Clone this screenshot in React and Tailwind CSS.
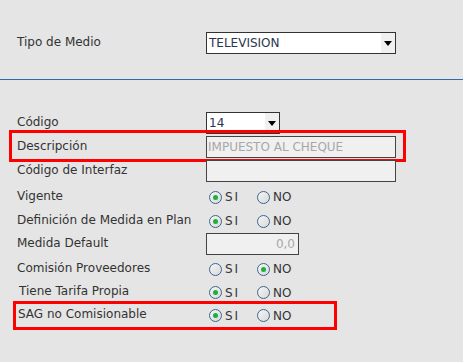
import React from 'react';

function Radio({ checked }) {
  return (
    <span className="relative inline-flex h-[13px] w-[13px] shrink-0 items-center justify-center rounded-full border border-[#3b6891] bg-gradient-to-br from-[#f6f6f6] to-[#d8d8d8]">
      {checked && <span className="h-[5px] w-[5px] rounded-full bg-[#1fae3a]" />}
    </span>
  );
}

function YesNo({ value }) {
  return (
    <div className="flex items-center text-[12px] text-[#333]">
      <label className="flex w-[48px] items-center gap-[3px]">
        <Radio checked={value === 'si'} />
        <span className="tracking-[2px]">SI</span>
      </label>
      <label className="flex items-center gap-[3px]">
        <Radio checked={value === 'no'} />
        <span>NO</span>
      </label>
    </div>
  );
}

function Select({ value, width }) {
  return (
    <div className={`flex h-[22px] shrink-0 items-stretch border border-[#333] bg-white ${width}`}>
      <span className="flex-1 pl-[2px] pt-[3px] text-[12px] leading-[14px] text-[#2b3550]">{value}</span>
      <span className="flex w-[14px] items-center justify-center bg-[#f0f0f0]">
        <span className="h-0 w-0 border-x-[4px] border-t-[5px] border-x-transparent border-t-black" />
      </span>
    </div>
  );
}

function Row({ label, children, labelClass = 'pl-[17px]', h = 'h-[24px]', annotate }) {
  return (
    <div className={`relative flex items-center ${h}`}>
      <div className={`w-[206px] shrink-0 whitespace-nowrap pb-[3px] text-[12px] text-[#333] ${labelClass}`}>{label}</div>
      {children}
      {annotate}
    </div>
  );
}

export default function App() {
  return (
    <div className="h-[362px] w-[463px] overflow-hidden bg-[#e5e5e5] font-['DejaVu_Sans',sans-serif]">
      {/* cabecera */}
      <div className="h-[79px] pt-[32px]">
        <Row label="Tipo de Medio" h="h-[22px]">
          <Select value="TELEVISION" width="w-[190px]" />
        </Row>
      </div>
      <div className="border-t border-[#2e6da4]" />

      {/* formulario */}
      <div className="flex flex-col pt-[32px]">
        <Row label="Código" h="h-[22px]">
          <Select value="14" width="w-[74px]" />
        </Row>
        <div className="h-[2px]" />
        <Row
          label="Descripción"
          h="h-[22px]"
          annotate={<div className="pointer-events-none absolute left-[9px] top-[-6px] h-[32px] w-[397px] border-[3px] border-[#ff0000]" />}
        >
          <div className="flex h-[22px] w-[190px] shrink-0 items-center border border-[#444] bg-[#f0f0f0] pl-[1px] text-[12px] text-[#a8a8a8]">
            IMPUESTO AL CHEQUE
          </div>
        </Row>
        <div className="h-[2px]" />
        <Row label="Código de Interfaz" h="h-[22px]">
          <div className="h-[22px] w-[190px] shrink-0 border border-[#444] bg-[#f0f0f0]" />
        </Row>
        <div className="h-[3px]" />
        <Row label="Vigente">
          <div className="pl-[3px]"><YesNo value="si" /></div>
        </Row>
        <Row label="Definición de Medida en Plan">
          <div className="pl-[3px]"><YesNo value="si" /></div>
        </Row>
        <Row label="Medida Default" h="h-[22px]">
          <div className="flex h-[22px] w-[93px] shrink-0 items-center justify-end border border-[#444] bg-[#f0f0f0] pr-[3px] text-[12px] text-[#a8a8a8]">
            0,0
          </div>
        </Row>
        <div className="h-[2px]" />
        <Row label="Comisión Proveedores">
          <div className="pl-[3px]"><YesNo value="no" /></div>
        </Row>
        <Row label="Tiene Tarifa Propia" labelClass="pl-[19px]" h="h-[23px]">
          <div className="pl-[3px]"><YesNo value="si" /></div>
        </Row>
        <Row
          label="SAG no Comisionable"
          labelClass="pl-[18px]"
          h="h-[23px]"
          annotate={<div className="pointer-events-none absolute left-[13px] top-[-3px] h-[29px] w-[324px] border-[3px] border-[#ff0000]" />}
        >
          <div className="pl-[3px]"><YesNo value="si" /></div>
        </Row>
      </div>
    </div>
  );
}
